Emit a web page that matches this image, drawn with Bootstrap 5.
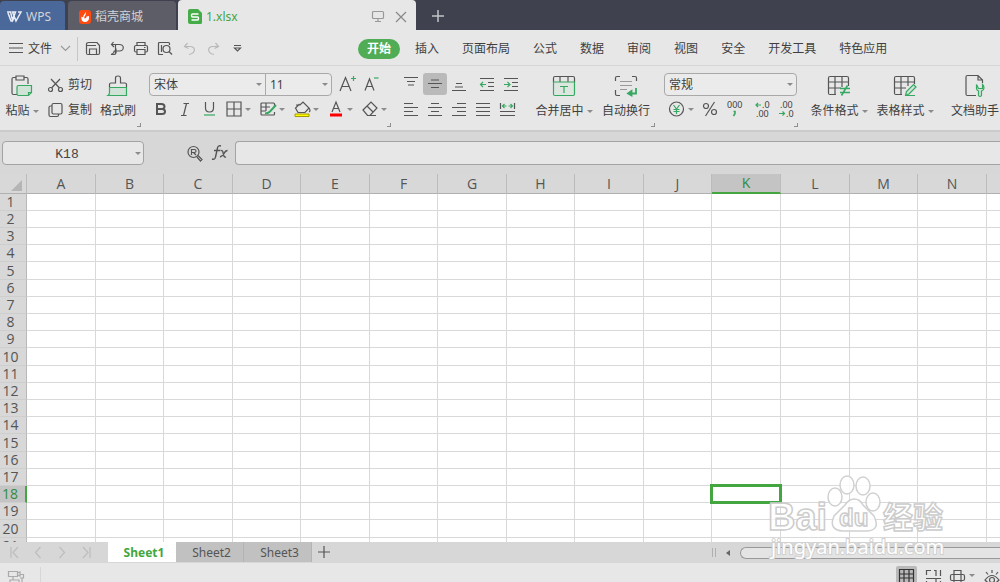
<!DOCTYPE html>
<html lang="zh-CN">
<head>
<meta charset="utf-8">
<meta name="viewport" content="width=device-width, initial-scale=1">
<title>1.xlsx - WPS</title>
<link href="https://cdn.jsdelivr.net/npm/bootstrap@5.3.0/dist/css/bootstrap.min.css" rel="stylesheet">
<style>
:root { --ink:#3f3f3f; --green:#43a640; --panel:#e7e7e7; --frame:#d7d7d7; --line:#c6c6c6; }
body { font:12px/18px "Noto Sans", "Noto Sans CJK SC", sans-serif; color:var(--ink); background:var(--panel); }
button { border:0; background:none; padding:0; color:inherit; font:inherit; }
svg { display:block; flex:none; fill:none; stroke:#555; stroke-width:1.2; overflow:visible; }
svg .g { stroke:#36a862; }
svg .gf { fill:#cfe3d6; stroke:#36a862; }
svg text { stroke:none; fill:var(--ink); font-family:"Noto Sans", sans-serif; }
.caret { width:0; height:0; border:3px solid transparent; border-top-color:#8b8b8b; border-bottom:0; flex:none; }

/* title bar */
.titlebar { height:30px; background:#3f424e; }
.doc-tab { height:29px; border-radius:4px 4px 0 0; color:#d3d4d8; text-decoration:none; padding-top:2px; }
.tab-home { width:65px; background:#4a6899; padding-left:7px; }
.tab-shop { width:108px; margin-left:3px; background:#5c5d67; padding-left:11px; }
.tab-file { width:238px; margin-left:2px; background:var(--panel); padding:3px 10px 0; color:var(--green); height:30px; }
.tab-home svg { stroke:#e8ecf4; }

/* menu */
.menubar { height:36px; border-bottom:1px solid #d6d6d6; padding-top:2px; }
.file-btn { padding-left:9px; gap:5px; }
.v-rule { width:1px; background:var(--line); }
.menubar .v-rule { height:24px; margin:0 3px 0 7px; }
.quick button { width:24px; height:24px; }
.menu-list { gap:23px; margin-left:109px; }
.menu-list a { color:var(--ink); text-decoration:none; white-space:nowrap; }
.menu-list .current { background:#50ad55; color:#fff; font-weight:700; border-radius:10px; line-height:20px; padding:0 9px; margin-right:-8px; }

/* ribbon */
.ribbon { height:66px; border-bottom:2px solid #cbcbcb; }
.ribbon .v-rule { margin:5px 0 2px; }
.tool-group { padding:7px 4px 0; flex:none; }
.tool-group.clip { padding:7px 5px 0 0; }
.tool-group.align { padding:7px 4px 0; }
.tool-group.number { padding-left:5px; }
.tool-group .corner { right:4px; bottom:3px; width:4px; height:4px; border:solid #8f8f8f; border-width:0 1px 1px 0; }
.row-a { height:22px; margin-bottom:2px; }
.row-b { height:24px; }
.big { width:58px; white-space:nowrap; }
.big .pic { height:26px; }
.big .txt { height:22px; gap:3px; padding-top:2px; }
.merge { margin-left:12px; }
.wrap-text { margin-left:4px; }
.paste { width:44px; }
.mini { gap:5px; width:44px; padding-top:2px; }
.tool { width:24px; height:22px; }
.tool.on { background:#bababa; border-radius:3px; }
.split { width:34px; height:22px; padding-left:4px; gap:2px; }
.split svg { width:18px; height:18px; }
.pick { appearance:none; height:23px; border:1px solid #a9a9a9; border-radius:4px; padding:0 6px 0 4px; font:12px "Noto Sans","Noto Sans CJK SC",sans-serif; color:var(--ink);
  background:#ebebeb url("data:image/svg+xml,%3Csvg xmlns='http://www.w3.org/2000/svg' width='6' height='3'%3E%3Cpath d='M0 0h6L3 3z' fill='%238b8b8b'/%3E%3C/svg%3E") no-repeat right 3px center; }
.pick-font { width:117px; border-radius:4px 0 0 4px; }
.pick-size { width:67px; margin-left:-1px; border-radius:0 4px 4px 0; }
.pick-format { width:133px; }

/* formula bar */
.formula { height:42px; background:var(--frame); padding-left:2px; }
.formula input { height:24px; border:1px solid #a3a3a3; background:var(--panel); border-radius:4px; color:#444; }
.formula .find { margin:0 9px 0 43px; }
.formula .fx { margin-right:6px; }
.name-box { width:142px; }
.name-box input { width:100%; font:13px "Liberation Mono",monospace; text-align:center; padding:3px 12px 0 0; }
.name-box .caret { right:3px; top:11px; }
.formula .entry { border-radius:4px 0 0 4px; border-right:0; min-width:0; }

/* sheet */
.sheet { min-height:0; overflow:hidden; background:#fff; }
.cells { table-layout:fixed; width:0; border-collapse:separate; border-spacing:0; }
.cells th, .cells td { padding:0; height:17px; border:solid #d9d9d9; border-width:0 1px 1px 0; }
.cells th { background:#d8d8d8; color:#555; font:14px/16px "Open Sans","Noto Sans",sans-serif; text-align:center; white-space:nowrap; }
.cells thead th { height:20px; line-height:19px; border-bottom-color:#b0b0b0; border-right-color:#bcbcbc; }
.cells tbody tr:nth-child(5n) > * { height:18px; }
.cells tbody th { border-right-color:#b9b9b9; border-bottom-color:#cecece; padding-right:5px; }
.cells col { width:68px; }
.cells col:nth-child(even), .cells col:nth-child(13), .cells col:nth-child(15) { width:69px; }
.cells col:nth-child(14) { width:68px; }
.cells col:first-child { width:27px; }
.cells thead th.hot { background:#c4c4c4; color:#2f8c3f; border-bottom:2px solid var(--green); line-height:18px; }
.cells tbody th.hot { background:#c4c4c4; color:#2f8c3f; border-right:2px solid var(--green); }
.cells .all { width:11px; height:11px; margin:4px 4px 0 auto; background:#b5b5b5; clip-path:polygon(100% 0,100% 100%,0 100%); }
.chosen { position:relative; }
.chosen::after { content:""; position:absolute; inset:-2px; border:3px solid var(--green); }

/* sheet tabs and status */
.sheetbar { height:21px; background:var(--frame); }
.sheetbar .steps { width:108px; padding-left:2px; }
.sheetbar .steps button { width:24px; height:20px; }
.sheetbar .steps svg { stroke:#bdbdbd; }
.sheet-tab { width:68px; height:20px; padding:2px 0 0 4px; background:#c1c1c1; color:#555; border-right:1px solid #b4b4b4; }
.sheet-tab.current { background:#fff; color:var(--green); font-weight:700; border:0; }
.plus { width:24px; height:20px; }
.hscroll { width:288px; gap:3px; }
.hscroll .grip { width:4px; height:9px; border:solid #b0b0b0; border-width:0 1px; }
.hscroll .back { width:12px; height:18px; margin:0 3px; }
.hscroll .thumb { height:12px; border:1px solid #999; border-right:0; border-radius:6px 0 0 6px; background:#e4e4e4; }
.status { height:19px; overflow:hidden; }
.status .view-on { background:#b9b9b9; width:21px; height:20px; border-radius:2px; }
.status .views { gap:9px; padding-top:3px; }
.watermark { right:54px; bottom:22px; pointer-events:none; }
</style>
</head>
<body>
<div class="vh-100 d-flex flex-column overflow-hidden position-relative">

<header class="titlebar d-flex align-items-end flex-shrink-0">
  <a href="#" class="doc-tab tab-home d-flex align-items-center gap-1">
    <svg width="15" height="12" viewBox="0 0 15 12" style="stroke-width:1.5"><path d="M0 1h3.500l2 8 3-8h-3l3.500 9L14 1h-3M1 2l3 8h1.500l2-5"/></svg>WPS</a>
  <a href="#" class="doc-tab tab-shop d-flex align-items-center">
    <svg class="me-1" width="12" height="14" viewBox="0 0 12 14"><rect width="12" height="14" rx="3" fill="#ff4a10" stroke="none"/><path d="M6.500 2C8 5 4.500 6 5.500 8.500 7 8.500 7.500 7.500 7.500 6.500l2.500-.5c.5 3.500-1 6-4 6S2 9.500 2.500 6.500l1.500 1C4 5 6 4.500 6.500 2z" fill="#fff" stroke="none"/></svg><span>稻壳商城</span></a>
  <div class="doc-tab tab-file d-flex align-items-center">
    <svg class="me-1" width="14" height="15" viewBox="0 0 14 15"><path d="M2 0h8l4 4v9.500q0 1.500-1.500 1.500H2q-2 0-2-2V2Q0 0 2 0z" fill="#45ad48" stroke="none"/><path d="M10.500 5H4.500q-1 0-1 1.500T4.500 8h5q1 0 1 1.500T9.500 11h-6" stroke="#fff" stroke-width="1.500"/></svg>
    <span>1.xlsx</span>
    <button class="ms-auto me-2" aria-label="窗口"><svg width="12" height="11" viewBox="0 0 12 11" style="stroke:#999"><rect x=".5" y=".5" width="11" height="7" rx="1"/><path d="M6 8v2.500M3 10.500h6"/></svg></button>
    <button class="ms-1" aria-label="关闭"><svg width="10" height="10" viewBox="0 0 10 10" style="stroke:#888"><path d="M0 0l10 10M10 0L0 10"/></svg></button>
  </div>
  <button class="ms-3 mb-2" aria-label="新建"><svg width="12" height="12" viewBox="0 0 12 12" style="stroke:#c3c4c8;stroke-width:1.5"><path d="M6 0v12M0 6h12"/></svg></button>
</header>

<nav class="menubar d-flex align-items-center flex-shrink-0">
  <button class="file-btn d-flex align-items-center">
    <svg width="14" height="11" viewBox="0 0 14 11"><path d="M0 .5h14M0 5h14M0 9.500h14"/></svg>文件
    <svg class="ms-1" width="9" height="5" viewBox="0 0 9 5" style="stroke:#999"><path d="M0 0l4.500 4.500L9 0"/></svg>
  </button>
  <i class="v-rule"></i>
  <div class="quick d-flex flex-shrink-0">
    <button class="d-grid" aria-label="保存"><svg class="m-auto" width="14" height="13" viewBox="0 0 14 13"><path d="M3 .5h8l2.500 3V11q0 1.500-1.500 1.500H2Q.5 12.500.5 11V2Q.5.500 3 .5zM1 3.500h9M3.500 12V7h7v5"/></svg></button>
    <button class="d-grid" aria-label="输出"><svg class="m-auto" width="14" height="13" viewBox="0 0 14 13"><path d="M1 2.500h8.500a3.500 3 0 010 6.500H6M3.500 0L1.500 2.500 4 5M5.500 3v8.500q0 1-1.500 1H1q3-1 3.500-4M6 6.500v5"/></svg></button>
    <button class="d-grid" aria-label="打印"><svg class="m-auto" width="14" height="13" viewBox="0 0 14 13"><path d="M3 3.500V.5h8v3M3 10H2Q.5 10 .5 8.500V5Q.5 3.500 2 3.500h10q1.500 0 1.500 1.500v3.500Q13.500 10 12 10h-1M3 7.500h8v5H3zM10 5.500h1.500"/></svg></button>
    <button class="d-grid" aria-label="打印预览"><svg class="m-auto" width="14" height="13" viewBox="0 0 14 13"><path d="M5 12.500H1.500q-1 0-1-1v-10q0-1 1-1h9q1 0 1 1V3M3.500 3v7"/><circle cx="8.500" cy="7" r="3.500"/><path d="M11 9.500l3 3"/></svg></button>
    <button class="d-grid" aria-label="撤销"><svg class="m-auto" width="11" height="12" viewBox="0 0 11 12" style="stroke:#b9b9b9"><path d="M3.500 0L.5 3.500l4 2M.5 3.500H6C12 3.500 12 10 5 11.500"/></svg></button>
    <button class="d-grid" aria-label="恢复"><svg class="m-auto" width="11" height="12" viewBox="0 0 11 12" style="stroke:#b9b9b9"><path d="M7.500 0l3 3.500-4 2M10.500 3.500H5C-1 3.500-1 10 6 11.500"/></svg></button>
    <button class="d-grid" aria-label="更多"><svg class="m-auto" width="7" height="7" viewBox="0 0 7 7"><path d="M0 .5h7M.5 3h6l-3 3z"/></svg></button>
  </div>
  <div class="menu-list d-flex align-items-center">
    <a href="#" class="current">开始</a><a href="#">插入</a><a href="#">页面布局</a><a href="#">公式</a><a href="#">数据</a><a href="#">审阅</a><a href="#">视图</a><a href="#">安全</a><a href="#">开发工具</a><a href="#">特色应用</a>
  </div>
</nav>

<section class="ribbon d-flex flex-shrink-0 overflow-hidden">
  <div class="tool-group clip d-flex position-relative">
    <button class="big paste d-flex flex-column align-items-center"><span class="pic d-flex align-items-center"><svg width="22" height="22" viewBox="0 0 22 22"><path d="M5 2.500H2.500Q1 2.500 1 4v14q0 1.500 1.500 1.500H6M13 2.500h2.500Q17 2.500 17 4v5M5 1h8v4H5z"/><path class="gf" d="M7.500 10.500h13v7l-3 3h-10q-1.500 0-1.500-1.500v-7q0-1.500 1.500-1.500zM20.500 17.500h-3v3"/></svg></span><span class="txt d-flex align-items-center">粘贴<i class="caret"></i></span></button>
    <div class="mx-1">
      <button class="mini row-a d-flex align-items-center"><svg width="15" height="13" viewBox="0 0 15 13"><path d="M3 0l8.500 9M12 0L3.500 9"/><circle cx="2.500" cy="10.500" r="2"/><circle cx="12.500" cy="10.500" r="2"/></svg>剪切</button>
      <button class="mini row-b d-flex align-items-center"><svg width="15" height="14" viewBox="0 0 15 14"><rect x="4" y=".5" width="10" height="10.500" rx="1.500"/><path d="M4 3H2.500Q1 3 1 4.500V12q0 1.500 1.500 1.500H9q1.500 0 1.500-1.500v-1"/></svg>复制</button>
    </div>
    <button class="big paste d-flex flex-column align-items-center"><span class="pic d-flex align-items-center"><svg width="20" height="22" viewBox="0 0 20 22"><path d="M1.500 12V9.500Q1.500 8 3 8h4.500V3q0-2 2.500-2t2.500 2v5H17q1.500 0 1.500 1.500V12"/><path class="gf" d="M1.500 12.500h17v8H0q1.500-1 1.500-3z"/></svg></span><span class="txt d-flex align-items-center">格式刷</span></button>
    <i class="corner position-absolute"></i>
  </div>
  <i class="v-rule"></i>

  <div class="tool-group position-relative">
    <div class="row-a d-flex align-items-center">
      <select class="pick pick-font" aria-label="字体"><option>宋体</option></select><select class="pick pick-size" aria-label="字号"><option>11</option></select>
      <button class="tool ms-1 d-grid" aria-label="增大字号"><svg class="m-auto" width="16" height="16" viewBox="0 0 16 16"><path d="M0 15L5.500 1.500 11 15M2 10.500h7"/><path class="g" d="M11 2.500h5M13.500 0v5"/></svg></button>
      <button class="tool d-grid" aria-label="减小字号"><svg class="m-auto" width="14" height="16" viewBox="0 0 14 16"><path d="M0 14.500L4.500 3 9 14.500M1.500 10.500h6"/><path class="g" d="M9 2h4.500"/></svg></button>
    </div>
    <div class="row-b d-flex align-items-center">
      <button class="tool d-grid" aria-label="加粗"><svg class="m-auto" width="10" height="12" viewBox="0 0 10 12" style="stroke-width:2"><path d="M1 1h4.500q3 0 3 2.500T5.500 6H1zM1 6h5q3 0 3 2.500T6 11H1z"/></svg></button>
      <button class="tool d-grid" aria-label="倾斜"><svg class="m-auto" width="8" height="13" viewBox="0 0 8 13"><path d="M2.500.5H8M0 12.500h5.500M5.500.5l-3 12"/></svg></button>
      <button class="tool d-grid" aria-label="下划线"><svg class="m-auto" width="11" height="14" viewBox="0 0 11 14"><path d="M1.500 0v6q0 4 4 4t4-4V0"/><path class="g" d="M0 13h11"/></svg></button>
      <button class="split d-flex align-items-center" aria-label="边框"><svg viewBox="0 0 18 18"><path d="M2 2h14v14H2zM9 2v14M2 9h14"/></svg><i class="caret"></i></button>
      <button class="split d-flex align-items-center" aria-label="表格样式"><svg viewBox="0 0 18 18"><path d="M15.500 7V4q0-1-1-1H3Q2 3 2 4v10q0 1 1 1h11.500q1 0 1-1v-2M2 7h9M2 11h5M7 3v8"/><path class="g" d="M17 5l-6 6.500q-2 2-5 2" style="stroke-width:2"/></svg><i class="caret"></i></button>
      <button class="split d-flex align-items-center" aria-label="填充颜色"><svg viewBox="0 0 18 18"><path d="M3 5h4l3-3 6 6-4 4.500H5L2.500 8l4-4M16 8q2 3 0 4"/><path d="M2 14h14v2.500H2z" style="fill:#ff0;stroke:#a59a00;stroke-width:1"/></svg><i class="caret"></i></button>
      <button class="split d-flex align-items-center" aria-label="字体颜色"><svg viewBox="0 0 18 18"><path d="M5 12L9 2l4 10M6.500 8.500h5"/><path d="M3 15h12" style="stroke:#f00;stroke-width:3"/></svg><i class="caret"></i></button>
      <button class="split d-flex align-items-center" aria-label="清除"><svg viewBox="0 0 18 18"><path d="M2 10l8-8 6 6-7 7.500H6.500zM6 6l6 6M7 15.500h8"/></svg><i class="caret"></i></button>
    </div>
    <i class="corner position-absolute"></i>
  </div>
  <i class="v-rule"></i>

  <div class="tool-group align d-flex position-relative">
    <div>
      <div class="row-a d-flex">
        <button class="tool d-grid" aria-label="顶端对齐"><svg class="m-auto" width="14" height="14" viewBox="0 0 14 14"><path d="M0 .5h14M3 4.500h8M4 8h6"/></svg></button>
        <button class="tool on d-grid" aria-label="垂直居中"><svg class="m-auto" width="14" height="14" viewBox="0 0 14 14"><path d="M3 3h8M0 6.500h14M3 10.500h8"/></svg></button>
        <button class="tool d-grid" aria-label="底端对齐"><svg class="m-auto" width="14" height="14" viewBox="0 0 14 14"><path d="M4 6.500h6M3 10h8M0 13.500h14"/></svg></button>
        <button class="tool ms-1 d-grid" aria-label="减少缩进"><svg class="m-auto" width="14" height="13" viewBox="0 0 14 13"><path d="M0 .5h14M8 4.500h6M8 8.500h6M0 12.500h14"/><path class="g" d="M6 6.500H1M3 4L.5 6.500 3 9"/></svg></button>
        <button class="tool d-grid" aria-label="增加缩进"><svg class="m-auto" width="14" height="13" viewBox="0 0 14 13"><path d="M0 .5h14M8 4.500h6M8 8.500h6M0 12.500h14"/><path class="g" d="M0 6.500h5M3.500 4L6 6.500 3.500 9"/></svg></button>
      </div>
      <div class="row-b d-flex align-items-center">
        <button class="tool d-grid" aria-label="左对齐"><svg class="m-auto" width="14" height="13" viewBox="0 0 14 13"><path d="M0 .5h9M0 4.500h14M0 8.500h9M0 12.500h14"/></svg></button>
        <button class="tool d-grid" aria-label="居中"><svg class="m-auto" width="14" height="13" viewBox="0 0 14 13"><path d="M3 .5h8M0 4.500h14M3 8.500h8M0 12.500h14"/></svg></button>
        <button class="tool d-grid" aria-label="右对齐"><svg class="m-auto" width="14" height="13" viewBox="0 0 14 13"><path d="M5 .5h9M0 4.500h14M5 8.500h9M0 12.500h14"/></svg></button>
        <button class="tool d-grid" aria-label="两端对齐"><svg class="m-auto" width="14" height="13" viewBox="0 0 14 13"><path d="M0 .5h14M0 4.500h14M0 8.500h14M0 12.500h14"/></svg></button>
        <button class="tool d-grid" aria-label="分散对齐"><svg class="m-auto" width="15" height="13" viewBox="0 0 15 13"><path d="M.5 0v6M14.500 0v6M0 8.500h15M0 12.500h15"/><path class="g" d="M2 3h4.500M4.500 1L2.500 3l2 2M8.500 3H13M10.500 1l2 2-2 2"/></svg></button>
      </div>
    </div>
    <button class="big merge d-flex flex-column align-items-center"><span class="pic d-flex align-items-center"><svg width="22" height="20" viewBox="0 0 22 20"><path d="M.5 6V2Q.5.500 2 .5h18q1.500 0 1.500 1.500v4M7 .5V6M15 .5V6"/><path class="gf" d="M.5 6h21v12q0 1.500-1.500 1.500H2Q.5 19.500.5 18z" style="fill:#dde7e0"/><path class="g" d="M7 10.500h8M11 10.500V17"/></svg></span><span class="txt d-flex align-items-center">合并居中<i class="caret"></i></span></button>
    <button class="big wrap-text d-flex flex-column align-items-center"><span class="pic d-flex align-items-center"><svg width="22" height="20" viewBox="0 0 22 20"><path d="M.5 5V2Q.5.500 2 .5h3M17 .5h3q1.500 0 1.500 1.500v3M.5 14v4q0 1.500 1.500 1.500h3"/><path d="M5 5.500h12M5 9.500h12M5 13.500h7" style="stroke:#999"/><path class="g" d="M21 12v5.500h-7M16.500 15L13 17.500l3.500 2z" style="stroke-width:1.8"/></svg></span><span class="txt d-flex align-items-center">自动换行</span></button>
    <i class="corner position-absolute"></i>
  </div>
  <i class="v-rule"></i>

  <div class="tool-group number position-relative">
    <div class="row-a d-flex align-items-center"><select class="pick pick-format" aria-label="数字格式"><option>常规</option></select></div>
    <div class="row-b d-flex align-items-center">
      <button class="split d-flex align-items-center" aria-label="货币"><svg viewBox="0 0 18 18"><circle cx="8.500" cy="9" r="7"/><path class="g" d="M5.500 5L8.500 9l3-4M8.500 9v5M5.500 9.500h6M5.500 11.500h6"/></svg><i class="caret"></i></button>
      <button class="tool d-grid" aria-label="百分比"><svg class="m-auto" width="14" height="14" viewBox="0 0 14 14"><circle cx="3" cy="4" r="2.500"/><circle cx="11" cy="10" r="2.500"/><path d="M11.500 0l-9 14"/></svg></button>
      <button class="tool d-grid" aria-label="千位分隔"><svg class="m-auto" width="15" height="18" viewBox="0 0 15 18"><text x="0" y="8" font-size="9">000</text><path class="g" d="M6.500 11.500h1.500v2L6.500 16" style="stroke-width:1.6"/></svg></button>
      <button class="tool ms-1 d-grid" aria-label="增加小数"><svg class="m-auto" width="14" height="18" viewBox="0 0 14 18"><text x="7" y="8" font-size="9">.0</text><text x="1" y="17" font-size="9">.00</text><path class="g" d="M6 5H1M3 3L1 5l2 2"/></svg></button>
      <button class="tool d-grid" aria-label="减少小数"><svg class="m-auto" width="14" height="18" viewBox="0 0 14 18"><text x="1" y="8" font-size="9">.00</text><text x="7" y="17" font-size="9">.0</text><path class="g" d="M0 13.500h5M3.500 11.500l2 2-2 2"/></svg></button>
    </div>
    <i class="corner position-absolute"></i>
  </div>
  <i class="v-rule"></i>

  <div class="tool-group d-flex px-2">
    <button class="big d-flex flex-column align-items-center"><span class="pic d-flex align-items-center"><svg width="22" height="20" viewBox="0 0 22 20"><path d="M8 18.500H2Q.5 18.500.5 17V2Q.5.500 2 .5h17q1.500 0 1.500 1.500v8M.5 6h20M.5 12H13M7 .5v18M14 .5V11"/><path class="g" d="M12 12.500h10M12 16.500h10M19.500 9.500l-6 10" style="stroke-width:1.6"/></svg></span><span class="txt d-flex align-items-center">条件格式<i class="caret"></i></span></button>
    <button class="big ms-2 d-flex flex-column align-items-center"><span class="pic d-flex align-items-center"><svg width="22" height="20" viewBox="0 0 22 20"><path d="M8 18.500H2Q.5 18.500.5 17V2Q.5.500 2 .5h17q1.500 0 1.500 1.500v6M.5 6h20M.5 12H12M7 .5v18M14 .5V10"/><path class="gf" d="M11.500 19.500l1-4 7-7 2.500 2.500-7 7-4 1.500h10"/></svg></span><span class="txt d-flex align-items-center">表格样式<i class="caret"></i></span></button>
  </div>
  <i class="v-rule"></i>
  <div class="tool-group d-flex">
    <button class="big d-flex flex-column align-items-center"><span class="pic d-flex align-items-center"><svg width="20" height="22" viewBox="0 0 20 22"><path d="M11 20.500H2.500Q1 20.500 1 19V2Q1 .5 2.500.5H13l4.500 4.500v3M13 .5V5h4.500"/><path class="gf" d="M11.500 9.500v4q0 1.500 2 2.500v4.500q1.500 2 3 0V16q2.500-1 2.500-3t-1.500-3.500v4h-4z"/></svg></span><span class="txt d-flex align-items-center">文档助手</span></button>
  </div>
</section>

<section class="formula d-flex align-items-center flex-shrink-0">
  <div class="name-box position-relative"><input type="text" value="K18" aria-label="名称框"><i class="caret position-absolute"></i></div>
  <button class="find" aria-label="查找"><svg width="15" height="15" viewBox="0 0 15 15"><circle cx="6.500" cy="6" r="5.500"/><path d="M4.500 9V3.500h3q1.500 0 1.500 1.500T7.500 6.500h-3M6.500 6.500L9 9M11 9.500l4 4-1.500 1.500-3.500-4"/></svg></button>
  <button class="fx" aria-label="插入函数"><svg width="18" height="16" viewBox="0 0 18 16"><path d="M10 1q-3-1-3.500 2L4.500 12q-.5 3-3.500 2M3 5.500h6M9.500 5.500q2-.5 2.500 2l1 3.500q.5 1.500 2 1M16.500 5.500q-2 0-3.500 3t-4 3.500" style="stroke-width:1.4"/></svg></button>
  <input class="entry flex-grow-1" type="text" aria-label="编辑栏">
</section>

<main class="sheet flex-grow-1" id="sheet"></main>

<footer class="flex-shrink-0">
  <div class="sheetbar d-flex align-items-start">
    <div class="steps d-flex">
      <button class="d-grid" aria-label="首个"><svg class="m-auto" width="9" height="11" viewBox="0 0 9 11"><path d="M1 0v11M8 0L3 5.500 8 11"/></svg></button>
      <button class="d-grid" aria-label="上一个"><svg class="m-auto" width="6" height="11" viewBox="0 0 6 11"><path d="M5.500 0l-5 5.500 5 5.500"/></svg></button>
      <button class="d-grid" aria-label="下一个"><svg class="m-auto" width="6" height="11" viewBox="0 0 6 11"><path d="M.5 0l5 5.500-5 5.500"/></svg></button>
      <button class="d-grid" aria-label="末个"><svg class="m-auto" width="9" height="11" viewBox="0 0 9 11"><path d="M8 0v11M1 0l5 5.500L1 11"/></svg></button>
    </div>
    <button class="sheet-tab current">Sheet1</button><button class="sheet-tab">Sheet2</button><button class="sheet-tab">Sheet3</button>
    <button class="plus d-grid" aria-label="新建工作表"><svg class="m-auto" width="12" height="12" viewBox="0 0 12 12"><path d="M6 0v12M0 6h12"/></svg></button>
    <div class="hscroll ms-auto d-flex align-items-center align-self-stretch">
      <span class="grip"></span>
      <button class="back d-grid" aria-label="向左滚动"><svg class="m-auto" width="4" height="6" viewBox="0 0 4 6"><path d="M4 0v6L0 3z" fill="#666" stroke="none"/></svg></button>
      <span class="thumb flex-grow-1"></span>
    </div>
  </div>
  <div class="status d-flex align-items-start">
    <svg class="ms-2 mt-2" width="16" height="16" viewBox="0 0 16 16" style="stroke:#aaa"><path d="M.5.5h9v5h-9zM9.500 2L12 1v4L9.500 4M5 6v3M2 9h9v5H2zM12 3.500h3.500V7H12M14 7v5h-3"/></svg>
    <i class="v-rule align-self-stretch mt-1 ms-3 opacity-50"></i>
    <div class="views ms-auto d-flex align-items-start">
      <button class="view-on d-grid" aria-label="普通视图"><svg class="m-auto" width="15" height="14" viewBox="0 0 15 14" style="stroke:#333"><path d="M.5.5h14v13H.5zM.5 5h14M.5 9h14M5 .5v13M10 .5v13"/></svg></button>
      <button class="mt-1" aria-label="分页预览"><svg width="15" height="14" viewBox="0 0 15 14"><path d="M.5 5V.5H5M8 .5h2V6M14.500 0v6M0 8.500h15M.5 11v3M10 8.500V14M14.500 11v3"/></svg></button>
      <button class="d-flex align-items-center gap-1" aria-label="阅读布局"><svg class="mt-1" width="15" height="15" viewBox="0 0 15 15"><path d="M4 .5h7v14H4zM4 4.500H2Q.5 4.500.5 6v3q0 1.500 1.500 1.500h11q1.500 0 1.500-1.500V6q0-1.500-1.500-1.500h-2M4 4.500h7M4 10.500h7"/></svg><i class="caret"></i></button>
      <button aria-label="护眼模式"><svg class="mt-1" width="16" height="15" viewBox="0 0 14 15"><path d="M0 10q7-9 14 0-7 8-14 0zM7 0v3M1 2l2 2.500M13 2l-2 2.500"/><circle cx="7" cy="10" r="2.500"/></svg></button>
    </div>
  </div>
</footer>

<svg class="watermark position-absolute" width="178" height="86" viewBox="0 0 178 86" aria-hidden="true">
  <g style="fill:#fff;fill-opacity:.8;stroke:#d0d0d0;stroke-width:1.5">
    <ellipse cx="67" cy="23" rx="7" ry="9"/><ellipse cx="79" cy="11" rx="7" ry="9"/><ellipse cx="95" cy="12" rx="7" ry="9"/><ellipse cx="105" cy="28" rx="7" ry="9"/>
    <path d="M86 25q6 0 9 6l11 11q7 14-7 15H75q-15-1-9-15l11-11q4-6 9-6z"/>
    <text x="0" y="56" style="font:700 38px 'Liberation Sans',sans-serif;fill:#fff;stroke:#ccc">Bai</text>
    <text x="71" y="52" style="font:700 24px 'Liberation Sans',sans-serif;fill:#fff;stroke:#ccc">du</text>
    <text x="115" y="54" style="font:700 30px 'Noto Sans CJK SC',sans-serif;fill:#fff;stroke:#ccc">经验</text>
  </g>
  <text x="3" y="80" style="font:20px 'Noto Sans',sans-serif;fill:#fff;stroke:#d0d0d0;stroke-width:2;paint-order:stroke">jingyan.baidu.com</text>
</svg>
</div>

<script src="https://cdn.jsdelivr.net/npm/bootstrap@5.3.0/dist/js/bootstrap.bundle.min.js"></script>
<script>
// Fill the sheet area with as many columns and rows as the window shows.
const sheet = document.getElementById('sheet');
function drawSheet() {
  const cols = Math.min(26, Math.ceil((sheet.clientWidth - 26) / 68));
  const rows = Math.ceil((sheet.clientHeight - 20) / 17.2);
  const active = { col: 'K', row: 18 };
  const names = Array.from({ length: cols }, (_, i) => String.fromCharCode(65 + i));
  let html = '<table class="cells"><colgroup><col>' + '<col>'.repeat(cols) + '</colgroup><thead><tr><th><div class="all"></div></th>';
  html += names.map(n => `<th scope="col"${n === active.col ? ' class="hot"' : ''}>${n}</th>`).join('') + '</tr></thead><tbody>';
  for (let r = 1; r <= rows; r++) {
    html += `<tr><th scope="row"${r === active.row ? ' class="hot"' : ''}>${r}</th>`;
    html += names.map(n => r === active.row && n === active.col ? '<td class="chosen"></td>' : '<td></td>').join('') + '</tr>';
  }
  sheet.innerHTML = html + '</tbody></table>';
}
drawSheet();
addEventListener('resize', drawSheet);
</script>
</body>
</html>
